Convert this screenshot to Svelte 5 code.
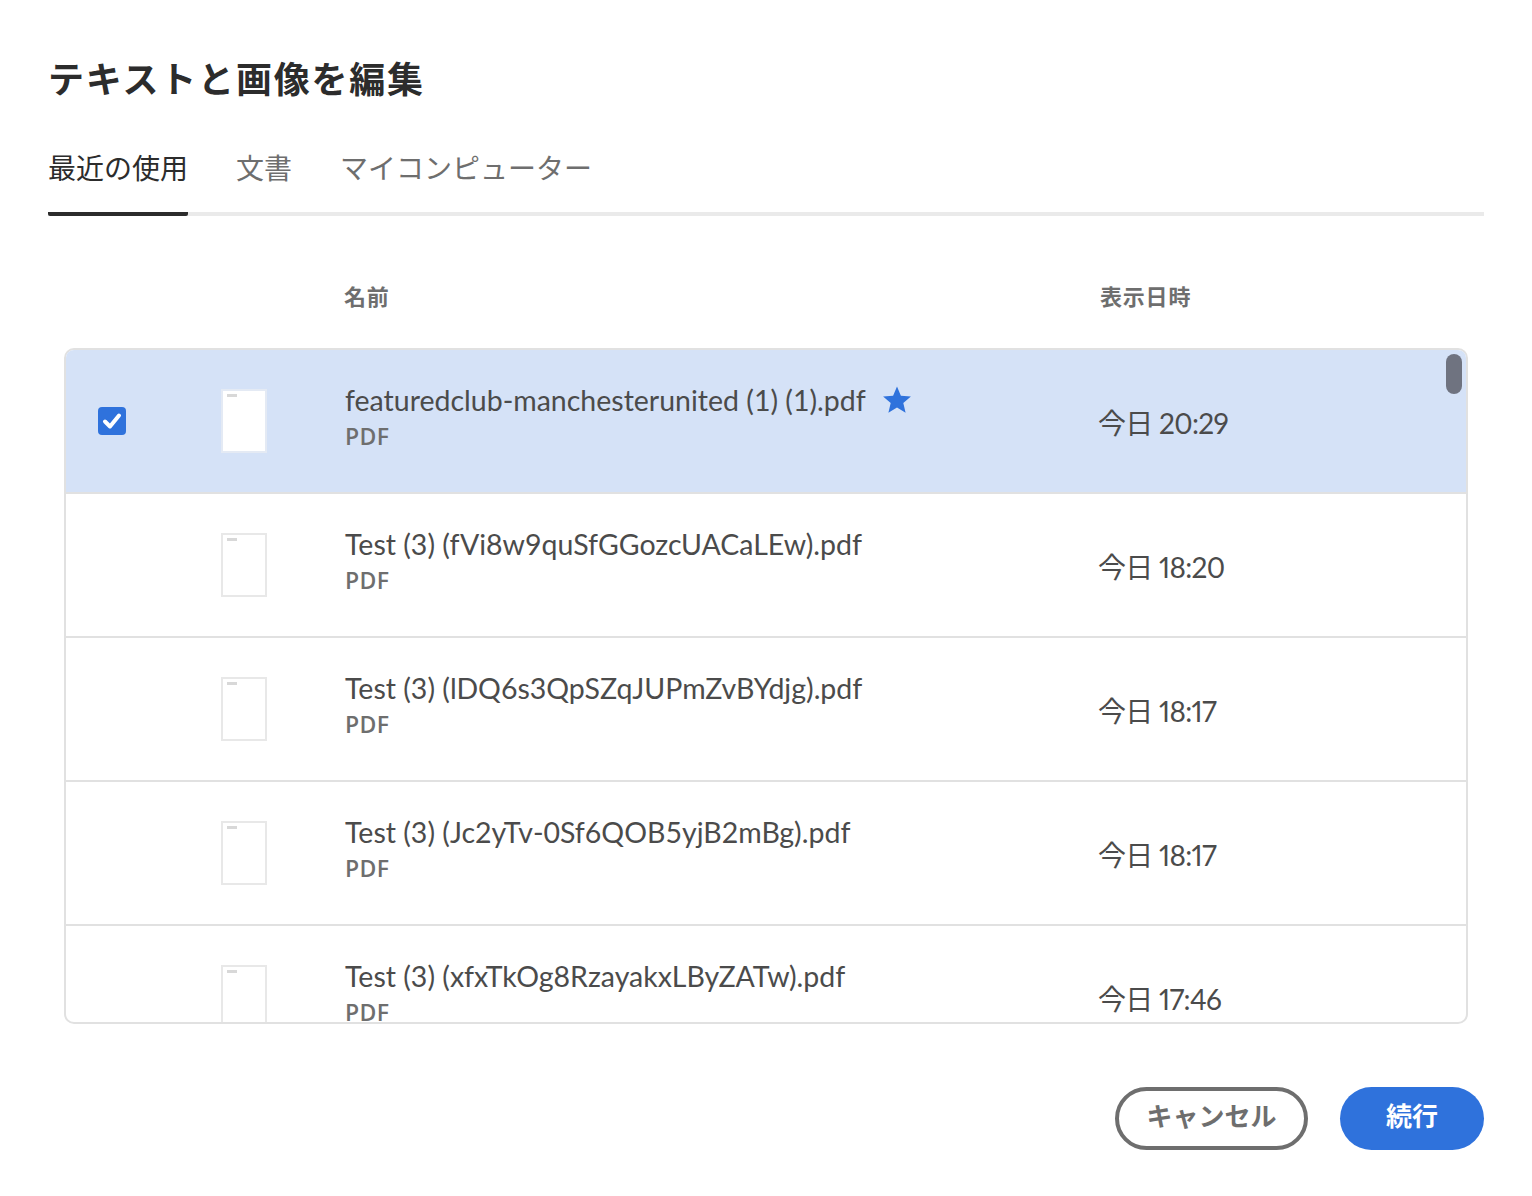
<script>
  const tabs = ["最近の使用", "文書", "マイコンピューター"];
  const files = [
    { name: "featuredclub-manchesterunited (1) (1).pdf", date: "今日 20:29", selected: true, starred: true },
    { name: "Test (3) (fVi8w9quSfGGozcUACaLEw).pdf", date: "今日 18:20" },
    { name: "Test (3) (lDQ6s3QpSZqJUPmZvBYdjg).pdf", date: "今日 18:17" },
    { name: "Test (3) (Jc2yTv-0Sf6QOB5yjB2mBg).pdf", date: "今日 18:17" },
    { name: "Test (3) (xfxTkOg8RzayakxLByZATw).pdf", date: "今日 17:46" },
  ];
</script>

<main class="dialog">
  <h1 class="title">テキストと画像を編集</h1>

  <nav class="tabs">
    {#each tabs as tab, i}
      <span class="tab" class:active={i === 0}>{tab}</span>
    {/each}
  </nav>

  <div class="columns">
    <span class="col-name">名前</span>
    <span class="col-date">表示日時</span>
  </div>

  <div class="list">
    <div class="rows">
      {#each files as file}
        <div class="row" class:selected={file.selected}>
          <div class="check-cell">
            {#if file.selected}
              <span class="check">
                <svg viewBox="0 0 28 28" width="28" height="28">
                  <path d="M7 14.5l5 5 9-11" fill="none" stroke="#fff" stroke-width="4" stroke-linecap="round" stroke-linejoin="round" />
                </svg>
              </span>
            {/if}
          </div>
          <div class="thumb"><span class="thumb-mark"></span></div>
          <div class="info">
            <div class="name">
              {file.name}
              {#if file.starred}
                <svg class="star" viewBox="0 0 30 30" width="30" height="30">
                  <path d="M15 1.5l3.9 9.2 10 .8-7.6 6.5 2.3 9.7L15 22.5l-8.6 5.2 2.3-9.7-7.6-6.5 10-.8z" fill="#2f72dc" />
                </svg>
              {/if}
            </div>
            <div class="kind">PDF</div>
          </div>
          <div class="date">{file.date}</div>
        </div>
      {/each}
    </div>
    <span class="scrollbar"></span>
  </div>

  <footer class="actions">
    <button class="btn cancel"><span>キャンセル</span></button>
    <button class="btn primary"><span>続行</span></button>
  </footer>
</main>

<style>
  :global(body) {
    background: #fff;
  }

  .dialog {
    box-sizing: border-box;
    width: 1532px;
    height: 1196px;
    padding: 53px 48px 0;
    font-family: "Lato", "Noto Sans CJK JP", sans-serif;
    color: #4b4b4b;
  }

  .title {
    margin: 0;
    font-family: "Noto Sans CJK JP", sans-serif;
    font-size: 36px;
    line-height: 48px;
    font-weight: 700;
    letter-spacing: 1.8px;
    color: #2c2c2c;
  }

  .tabs {
    display: flex;
    gap: 48px;
    margin-top: 46px;
    height: 65px;
    border-bottom: 4px solid #eaeaea;
    font-family: "Noto Sans CJK JP", sans-serif;
    font-size: 28px;
    line-height: 40px;
  }

  .tab {
    box-sizing: border-box;
    height: 69px;
    color: #6e6e6e;
  }

  .tab.active {
    color: #2c2c2c;
    border-bottom: 4px solid #2c2c2c;
    border-radius: 2px;
  }

  .columns {
    display: grid;
    grid-template-columns: 756px 1fr;
    padding: 0 0 0 296px;
    margin-top: 63px;
    font-family: "Noto Sans CJK JP", sans-serif;
    font-size: 22px;
    line-height: 32px;
    font-weight: 700;
    letter-spacing: 0.8px;
    color: #6e6e6e;
  }

  .list {
    position: relative;
    box-sizing: border-box;
    width: 1404px;
    height: 676px;
    margin: 37px 0 0 16px;
    border: 2px solid #e1e1e1;
    border-radius: 10px;
    overflow: hidden;
  }

  .rows {
    display: flex;
    flex-direction: column;
  }

  .row {
    box-sizing: border-box;
    flex: none;
    display: grid;
    grid-template-columns: 155px 124px 753px 1fr;
    align-items: center;
    height: 144px;
    border-bottom: 2px solid #e1e1e1;
  }

  .row.selected {
    background: #d5e2f7;
  }

  .check-cell {
    padding-left: 32px;
  }

  .check {
    display: block;
    width: 28px;
    height: 28px;
    border-radius: 4px;
    background: #2f72dc;
  }

  .check svg {
    display: block;
  }

  .thumb {
    box-sizing: border-box;
    width: 46px;
    height: 64px;
    padding: 3px 0 0 4px;
    background: #fff;
    border: 2px solid #e8e8e8;
  }

  .selected .thumb {
    border-color: #e4eaf4;
  }

  .thumb-mark {
    display: block;
    width: 10px;
    height: 3px;
    background: #d8d8d8;
  }

  .info {
    padding-bottom: 12px;
  }

  .name {
    display: flex;
    align-items: center;
    gap: 16px;
    height: 40px;
    font-size: 28.5px;
    white-space: nowrap;
    color: #4b4b4b;
  }

  .kind {
    margin-top: 1px;
    font-family: "Open Sans", sans-serif;
    font-size: 23px;
    line-height: 30px;
    font-weight: 600;
    letter-spacing: 0.4px;
    color: #6e6e6e;
  }

  .date {
    padding-top: 2px;
    font-size: 28px;
    letter-spacing: -0.7px;
    font-feature-settings: "pnum";
    color: #4b4b4b;
  }

  .scrollbar {
    position: absolute;
    top: 4px;
    right: 4px;
    width: 16px;
    height: 40px;
    border-radius: 8px;
    background: #6f7380;
  }

  .actions {
    display: flex;
    justify-content: flex-end;
    gap: 32px;
    margin-top: 63px;
  }

  .btn {
    box-sizing: border-box;
    height: 63px;
    border-radius: 32px;
    font-family: "Noto Sans CJK JP", sans-serif;
    font-size: 26px;
    font-weight: 700;
    padding: 0 0 9px;
  }

  .cancel {
    width: 193px;
    background: #fff;
    border: 4px solid #6e6e6e;
    color: #6e6e6e;
  }

  .primary {
    width: 144px;
    background: #2f72dc;
    border: none;
    color: #fff;
  }
</style>
